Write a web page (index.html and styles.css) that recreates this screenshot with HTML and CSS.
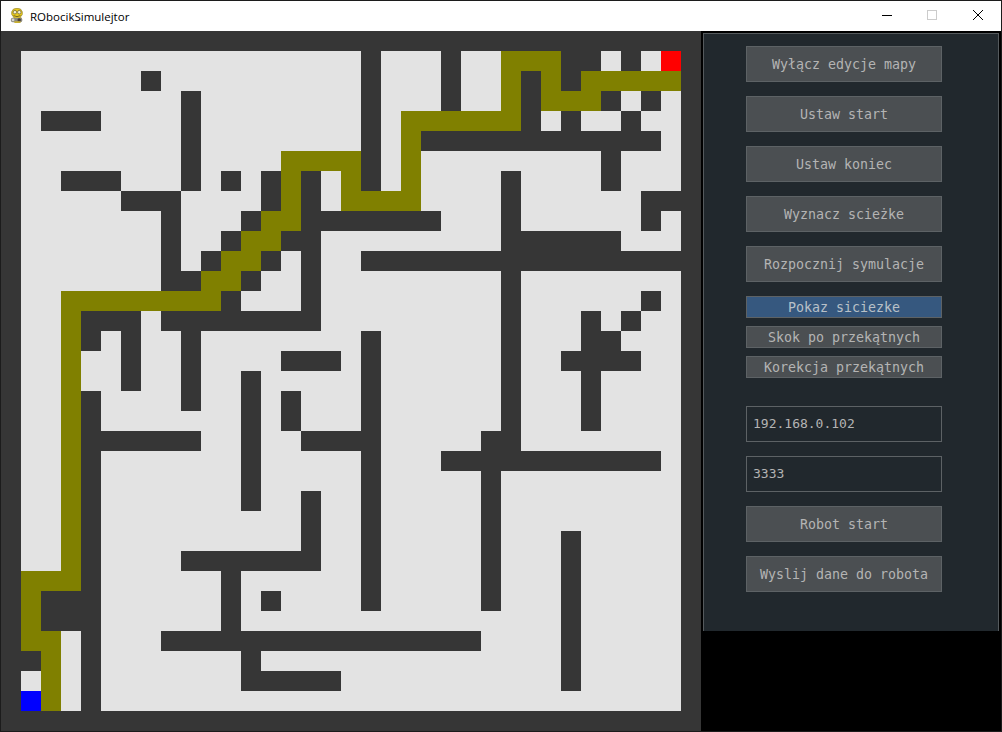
FILE: index.html
```html
<!DOCTYPE html>
<html lang="pl">
<head>
    <meta charset="UTF-8">
    <title>RObocikSimulejtor</title>
    <link rel="stylesheet" href="styles.css">
</head>
<body>
    <div class="window">
        <div class="titlebar">
            <svg class="app-icon" width="14" height="16" viewBox="0 0 16 18">
                <path d="M4 1 Q8 -0.5 12 1 L14 4 Q15 8 12 10 L13 12 L5 12 L4 10 Q1 8 2 4 Z" fill="#e6c81e" stroke="#8a7a20" stroke-width="0.7"/>
                <circle cx="5.6" cy="4.6" r="2" fill="#f4f0d0" stroke="#5a5030" stroke-width="0.7"/>
                <circle cx="10.6" cy="4.6" r="2" fill="#f4f0d0" stroke="#5a5030" stroke-width="0.7"/>
                <path d="M4 8.5 Q8 11 12 8.5" fill="none" stroke="#6a5c20" stroke-width="1"/>
                <rect x="1" y="11" width="13" height="5" rx="2" fill="#8d8a80"/>
                <circle cx="3.5" cy="13.5" r="1.6" fill="#d8d8d0"/>
                <circle cx="10.5" cy="13.5" r="2" fill="#4a4038"/>
                <rect x="5" y="15" width="7" height="2" fill="#c8b030"/>
            </svg>
            <span class="app-title">RObocikSimulejtor</span>
            <div class="win-controls">
                <div class="win-btn win-min">
                    <svg width="10" height="10" viewBox="0 0 10 10"><path d="M0 5.5H10" stroke="#000" stroke-width="1"/></svg>
                </div>
                <div class="win-btn">
                    <svg width="10" height="10" viewBox="0 0 10 10"><rect x="0.5" y="0.5" width="9" height="9" fill="none" stroke="#ccc" stroke-width="1"/></svg>
                </div>
                <div class="win-btn">
                    <svg width="10" height="10" viewBox="0 0 10 10"><path d="M0 0L10 10M10 0L0 10" stroke="#000" stroke-width="1"/></svg>
                </div>
            </div>
        </div>
        <div class="content">
            <div class="map" id="map"></div>
            <div class="side">
                <div class="panel">
                    <button class="btn">Wyłącz edycje mapy</button>
                    <button class="btn">Ustaw start</button>
                    <button class="btn">Ustaw koniec</button>
                    <button class="btn">Wyznacz scieżke</button>
                    <button class="btn">Rozpocznij symulacje</button>
                    <div class="toggles">
                        <button class="btn btn-small selected">Pokaz siciezke</button>
                        <button class="btn btn-small">Skok po przekątnych</button>
                        <button class="btn btn-small">Korekcja przekątnych</button>
                    </div>
                    <input class="field field-ip" type="text" value="192.168.0.102">
                    <input class="field" type="text" value="3333">
                    <button class="btn">Robot start</button>
                    <button class="btn">Wyslij dane do robota</button>
                </div>
            </div>
        </div>
    </div>
    <script src="map.js"></script>
</body>
</html>
```

FILE: styles.css
```css
* {
    margin: 0;
    padding: 0;
    box-sizing: border-box;
}

body {
    width: 1002px;
    height: 732px;
    overflow: hidden;
    background: #000;
}

.window {
    width: 1002px;
    height: 732px;
    border: 1px solid #1c1c1c;
    display: flex;
    flex-direction: column;
    background: #000;
}

.titlebar {
    height: 30px;
    flex-shrink: 0;
    background: #fff;
    display: flex;
    align-items: center;
    padding-left: 9px;
}

.app-icon {
    margin-right: 6px;
}

.app-title {
    font-family: "Open Sans", "Noto Sans", sans-serif;
    font-size: 11.5px;
    color: #000;
}

.win-controls {
    margin-left: auto;
    display: flex;
}

.win-btn {
    width: 46px;
    height: 30px;
    padding-bottom: 2px;
    display: flex;
    align-items: center;
    justify-content: center;
}

.win-min {
    padding-left: 2px;
}

.content {
    display: flex;
    flex: 1;
    min-height: 0;
}

.map {
    width: 700px;
    height: 700px;
    flex-shrink: 0;
    display: grid;
    grid-template-columns: repeat(35, 20px);
    grid-template-rows: repeat(35, 20px);
    background: #e3e3e3;
}

.cell-wall {
    background: #363636;
}

.cell-path {
    background: #808000;
}

.cell-start {
    background: #0000ff;
}

.cell-end {
    background: #ff0000;
}

.side {
    flex: 1;
    background: #000;
}

.panel {
    width: 296px;
    height: 598px;
    margin: 2px 0 0 2px;
    padding: 12px 0 0 42px;
    background: #21282d;
    border: 1px solid #555a5d;
    border-bottom: none;
    display: flex;
    flex-direction: column;
    align-items: flex-start;
    gap: 14px;
}

.btn {
    width: 196px;
    height: 36px;
    background: #4b4f52;
    border: 1px solid #5d6265;
    color: #b4b4b4;
    font-family: "DejaVu Sans Mono", "Liberation Mono", monospace;
    font-size: 13.3px;
    text-align: center;
    flex-shrink: 0;
}

.btn-small {
    height: 22px;
}

.btn.selected {
    background: #36587f;
    color: #b8c0c8;
}

.toggles {
    display: flex;
    flex-direction: column;
    gap: 8px;
}

.field {
    width: 196px;
    height: 36px;
    background: #21282d;
    border: 1px solid #5d6265;
    color: #b4b4b4;
    font-family: "DejaVu Sans Mono", "Liberation Mono", monospace;
    font-size: 13px;
    padding: 0 0 2px 6px;
    flex-shrink: 0;
    outline: none;
}

.field-ip {
    margin-top: 14px;
}
```

FILE: map.js
```js
// # wall, o path, S start, E end
var rows = [
    "###################################",
    "#.................#...#..ooo##.#.E#",
    "#......#..........#...#..o#o#ooooo#",
    "#........#........#...#..o#ooo#.#.#",
    "#.###....#........#.oooooo#.#..#..#",
    "#........#........#.o############.#",
    "#........#....oooo#.o.........#...#",
    "#..###...#.#.#o#.o#.o....#....#...#",
    "#.....###....#o#.oooo....#......###",
    "#.......#...#oo#######...#......#.#",
    "#.......#..#oo##.........######...#",
    "#.......#.#oo#.#..#################",
    "#.......##oo#..#.........#........#",
    "#..oooooooo#...#.........#......#.#",
    "#..o###.########.........#...#.#..#",
    "#..o#.#..#........#......#...##...#",
    "#..o..#..#....###.#......#..####..#",
    "#..o..#..#..#.....#......#...#....#",
    "#..o#....#..#.#...#......#...#....#",
    "#..o#.......#.#...#......#...#....#",
    "#..o######..#..####.....##........#",
    "#..o#.......#.....#...###########.#",
    "#..o#.......#.....#.....#.........#",
    "#..o#.......#..#..#.....#.........#",
    "#..o#..........#..#.....#.........#",
    "#..o#..........#..#.....#...#.....#",
    "#..o#....#######..#.....#...#.....#",
    "#ooo#......#......#.....#...#.....#",
    "#o###......#.#....#.....#...#.....#",
    "#o###......#................#.....#",
    "#oo.#...################....#.....#",
    "##o.#.......#...............#.....#",
    "#.o.#.......#####...........#.....#",
    "#So.#.............................#",
    "###################################"
];

var classes = { "#": "cell-wall", "o": "cell-path", "S": "cell-start", "E": "cell-end" };
var map = document.getElementById("map");

rows.forEach(function (row) {
    row.split("").forEach(function (ch) {
        var cell = document.createElement("div");
        if (classes[ch]) cell.className = classes[ch];
        map.appendChild(cell);
    });
});
```
